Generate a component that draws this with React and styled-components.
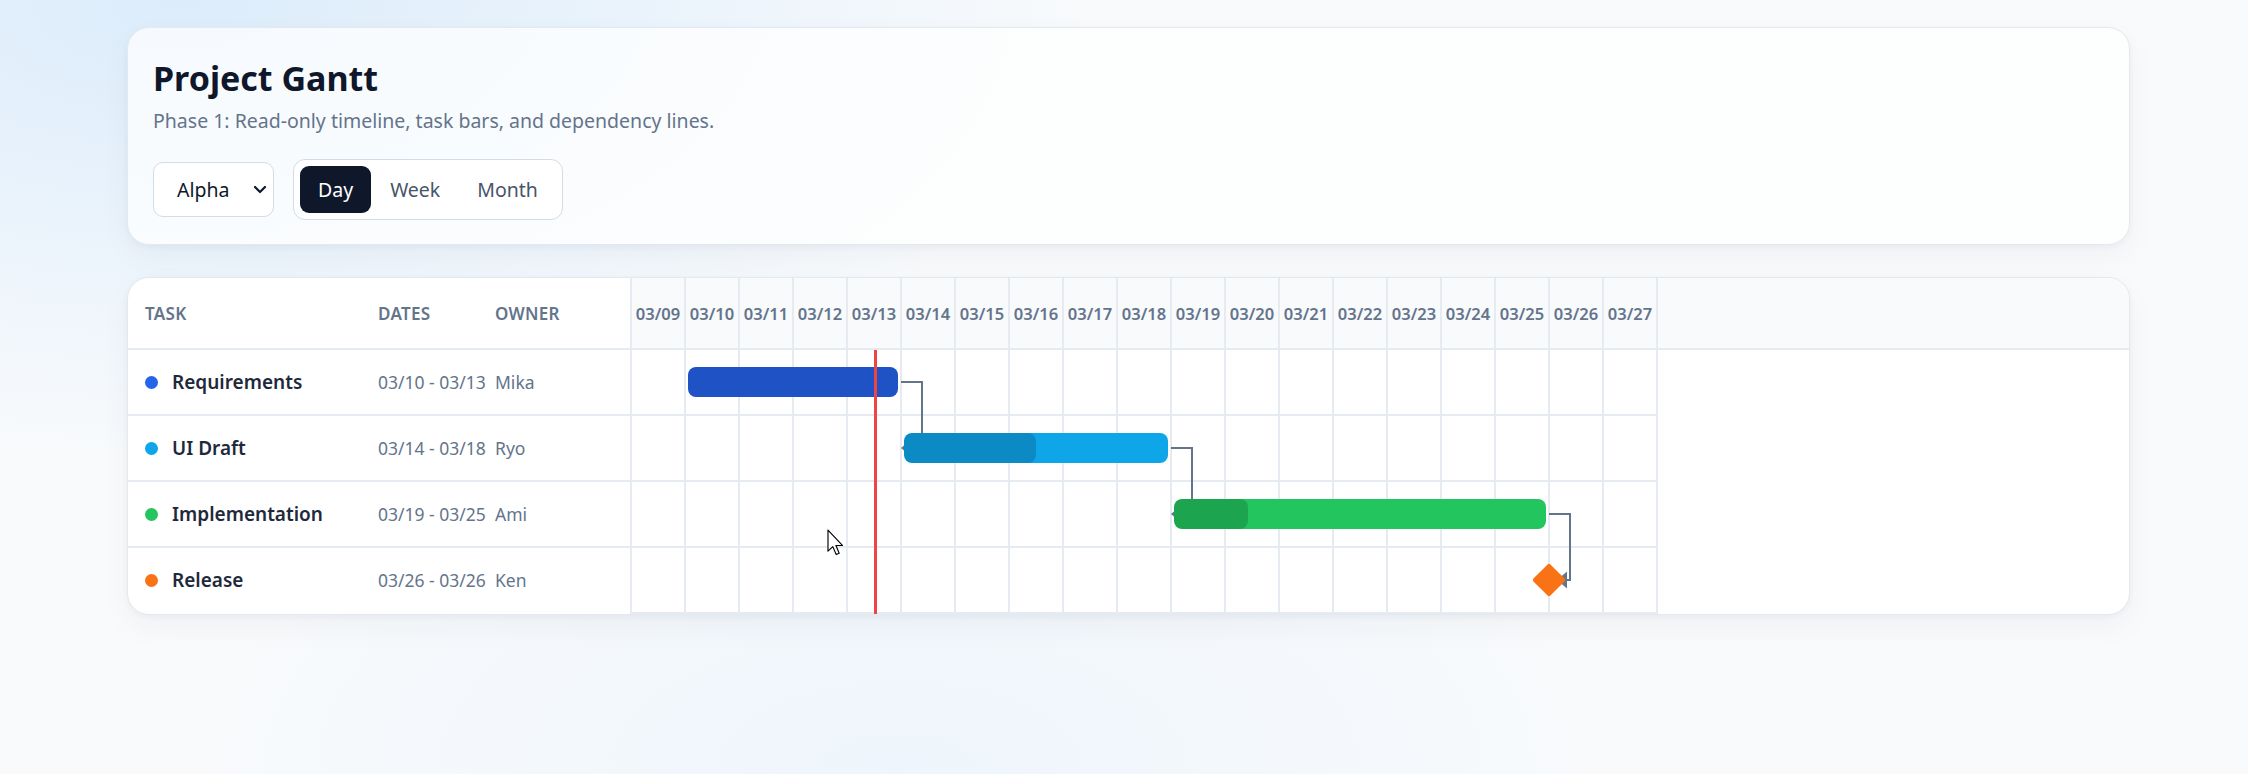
import React from 'react';
import styled, {createGlobalStyle, css} from 'styled-components';

const GlobalStyle = createGlobalStyle`
    html, body {
        margin: 0;
        padding: 0;
    }
    body {
        font-family: "Segoe UI", "Noto Sans", sans-serif;
        background:
            radial-gradient(1300px 650px at 8% 0%, #dcecfb 0%, rgba(220, 236, 251, 0) 70%),
            radial-gradient(1000px 500px at 40% 100%, #eef5fc 0%, rgba(238, 245, 252, 0) 70%),
            #f8fafc;
        min-height: 774px;
    }
`

const COL = 54;
const ROW = 66;

const days = ['03/09','03/10','03/11','03/12','03/13','03/14','03/15','03/16','03/17','03/18',
    '03/19','03/20','03/21','03/22','03/23','03/24','03/25','03/26','03/27'];

const tasks = [
    {id: 'req', name: 'Requirements', dates: '03/10 - 03/13', owner: 'Mika', color: '#2563eb', start: 1, length: 4, progress: 100},
    {id: 'ui', name: 'UI Draft', dates: '03/14 - 03/18', owner: 'Ryo', color: '#0ea5e9', start: 5, length: 5, progress: 50},
    {id: 'impl', name: 'Implementation', dates: '03/19 - 03/25', owner: 'Ami', color: '#22c55e', start: 10, length: 7, progress: 20},
    {id: 'rel', name: 'Release', dates: '03/26 - 03/26', owner: 'Ken', color: '#f97316', start: 17, milestone: true},
];

const barLeft = t => t.start * COL + 2;
const barRight = t => (t.start + t.length) * COL - 4;
const rowCenter = i => i * ROW + 32;

const Page = styled.div`
    position: relative;
    min-height: 774px;
    box-sizing: border-box;
    padding: 27px 0 0 127px;
`
const Shell = styled.div`
    width: 2003px;
    display: flex;
    flex-direction: column;
    gap: 32px;
`
const Card = styled.div`
    box-sizing: border-box;
    border: 1px solid #e3e9f1;
    border-radius: 22px;
    box-shadow: 0 2px 6px rgba(15, 23, 42, 0.04), 0 12px 32px rgba(15, 23, 42, 0.04);
`
const HeaderCard = styled(Card)`
    background: rgba(255, 255, 255, 0.72);
    padding: 30px 25px 24px;
`
const Title = styled.h1`
    margin: 0;
    font-size: 34px;
    line-height: 40px;
    font-weight: 700;
    color: #0f172a;
`
const Subtitle = styled.p`
    margin: 9px 0 0;
    font-size: 19.5px;
    line-height: 28px;
    color: #64748b;
`
const Controls = styled.div`
    margin-top: 24px;
    display: flex;
    align-items: center;
    gap: 19px;
`
const SelectBox = styled.div`
    box-sizing: border-box;
    width: 121px;
    height: 55px;
    display: flex;
    align-items: center;
    justify-content: space-between;
    padding: 0 6px 0 23px;
    border: 1px solid #d3dbe6;
    border-radius: 10px;
    background: #fff;
    font-size: 19.5px;
    color: #0f172a;
`
const Segmented = styled.div`
    display: flex;
    gap: 1px;
    padding: 6px;
    border: 1px solid #d3dbe6;
    border-radius: 12px;
    background: #fff;
`
const SegButton = styled.div`
    height: 47px;
    padding: 0 18px;
    display: flex;
    align-items: center;
    border-radius: 9px;
    font-size: 19.5px;
    color: #475569;
    ${props => props.active && css`
        background: #0f172a;
        color: #fff;
    `}
`

const GanttCard = styled(Card)`
    background: #fff;
    overflow: hidden;
`
const HeadRow = styled.div`
    display: flex;
    height: 72px;
    box-sizing: border-box;
    border-bottom: 2px solid #e6ebf2;
`
const LeftCols = css`
    box-sizing: border-box;
    width: 504px;
    flex: none;
    display: grid;
    grid-template-columns: 233px 117px 1fr;
    align-items: center;
    padding-left: 17px;
    border-right: 2px solid #e6ebf2;
`
const HeadLeft = styled.div`
    ${LeftCols}
    font-size: 17px;
    font-weight: 600;
    letter-spacing: 0.3px;
    color: #64748b;
`
const HeadTimeline = styled.div`
    flex: 1;
    display: flex;
    background: #f8fafc;
`
const DayCell = styled.div`
    box-sizing: border-box;
    width: ${COL}px;
    flex: none;
    border-right: 2px solid #e6ebf2;
    display: flex;
    align-items: center;
    justify-content: center;
    font-size: 16.5px;
    font-weight: 600;
    color: #64748b;
`
const Body = styled.div`
    display: flex;
`
const BodyLeft = styled.div`
    box-sizing: border-box;
    width: 504px;
    flex: none;
    border-right: 2px solid #e6ebf2;
`
const TaskRow = styled.div`
    ${LeftCols}
    width: 502px;
    border-right: none;
    height: ${ROW}px;
    border-bottom: 2px solid #e6ebf2;
    &:last-child {
        height: ${ROW - 2}px;
        border-bottom: none;
    }
`
const TaskName = styled.div`
    display: flex;
    align-items: center;
    gap: 14px;
    font-size: 19px;
    font-weight: 600;
    color: #1e293b;
`
const Dot = styled.span`
    width: 13px;
    height: 13px;
    border-radius: 50%;
    background: ${props => props.color};
`
const Meta = styled.div`
    font-size: 17.5px;
    color: #64748b;
`
const TimelineBody = styled.div`
    position: relative;
    width: ${COL * days.length}px;
    flex: none;
`
const GridRow = styled.div`
    display: flex;
    height: ${ROW}px;
    box-sizing: border-box;
    border-bottom: 2px solid #e6ebf2;
    &:last-child {
        height: ${ROW - 2}px;
        border-bottom: none;
    }
`
const GridCell = styled.div`
    box-sizing: border-box;
    width: ${COL}px;
    flex: none;
    border-right: 2px solid #e6ebf2;
`
const Links = styled.svg`
    position: absolute;
    left: 0;
    top: 0;
    overflow: visible;
`
const Bar = styled.div`
    position: absolute;
    height: 30px;
    border-radius: 8px;
    overflow: hidden;
    background: ${props => props.color};
`
const Progress = styled.div`
    height: 100%;
    border-radius: 8px;
    background: rgba(0, 0, 0, 0.16);
`
const Milestone = styled.div`
    position: absolute;
    width: 24px;
    height: 24px;
    margin: -12px 0 0 -12px;
    border-radius: 2px;
    transform: rotate(45deg);
    background: ${props => props.color};
`
const TodayLine = styled.div`
    position: absolute;
    top: 0;
    bottom: 0;
    left: ${COL * 4.5 - 1.5}px;
    width: 3px;
    background: #ef4444;
`
const Cursor = styled.svg`
    position: absolute;
    left: 827px;
    top: 529px;
`

function Chevron() {
    return (
        <svg width="14" height="9" viewBox="0 0 14 9">
            <polyline points="2,2 7,7 12,2" fill="none" stroke="#0f172a" strokeWidth="2.2" strokeLinecap="round" strokeLinejoin="round"/>
        </svg>
    )
}

function Link({x1, y1, y2, tip}) {
    const elbow = x1 + 21;
    return (
        <g>
            <path d={`M${x1} ${y1} H${elbow} V${y2} H${tip + 6}`} fill="none" stroke="#64748b" strokeWidth="2"/>
            <polygon points={`${tip},${y2} ${tip + 10},${y2 - 8.5} ${tip + 10},${y2 + 8.5}`} fill="#64748b"/>
        </g>
    )
}

function Timeline() {
    const [req, ui, impl, rel] = tasks;
    const ms = {x: rel.start * COL - 1, y: rowCenter(3)};
    return (
        <TimelineBody>
            {tasks.map(t => (
                <GridRow key={t.id}>
                    {days.map(d => <GridCell key={d}/>)}
                </GridRow>
            ))}
            <Links width={COL * days.length} height={ROW * 4 - 2}>
                <Link x1={barRight(req) + 3} y1={rowCenter(0)} y2={rowCenter(1)} tip={barLeft(ui) - 3}/>
                <Link x1={barRight(ui) + 3} y1={rowCenter(1)} y2={rowCenter(2)} tip={barLeft(impl) - 3}/>
                <Link x1={barRight(impl) + 3} y1={rowCenter(2)} y2={ms.y} tip={ms.x + 8}/>
            </Links>
            {tasks.filter(t => !t.milestone).map((t, i) => (
                <Bar key={t.id} color={t.color}
                    style={{left: barLeft(t), width: barRight(t) - barLeft(t), top: i * ROW + 17}}>
                    <Progress style={{width: t.progress + '%'}}/>
                </Bar>
            ))}
            <Milestone color={rel.color} style={{left: ms.x, top: ms.y}}/>
            <TodayLine/>
        </TimelineBody>
    )
}

export default function App() {
    return (
        <Page>
            <GlobalStyle/>
            <Shell>
                <HeaderCard>
                    <Title>Project Gantt</Title>
                    <Subtitle>Phase 1: Read-only timeline, task bars, and dependency lines.</Subtitle>
                    <Controls>
                        <SelectBox>
                            <span>Alpha</span>
                            <Chevron/>
                        </SelectBox>
                        <Segmented>
                            <SegButton active>Day</SegButton>
                            <SegButton>Week</SegButton>
                            <SegButton>Month</SegButton>
                        </Segmented>
                    </Controls>
                </HeaderCard>

                <GanttCard>
                    <HeadRow>
                        <HeadLeft>
                            <div>TASK</div>
                            <div>DATES</div>
                            <div>OWNER</div>
                        </HeadLeft>
                        <HeadTimeline>
                            {days.map(d => <DayCell key={d}>{d}</DayCell>)}
                        </HeadTimeline>
                    </HeadRow>
                    <Body>
                        <BodyLeft>
                            {tasks.map(t => (
                                <TaskRow key={t.id}>
                                    <TaskName><Dot color={t.color}/>{t.name}</TaskName>
                                    <Meta>{t.dates}</Meta>
                                    <Meta>{t.owner}</Meta>
                                </TaskRow>
                            ))}
                        </BodyLeft>
                        <Timeline/>
                    </Body>
                </GanttCard>
            </Shell>
            <Cursor width="17" height="27" viewBox="0 0 12 19">
                <path d="M0.7 0.7 L0.7 15.6 L4.1 12.4 L6.5 18 L8.6 17.1 L6.3 11.6 L10.9 11.6 Z"
                    fill="#fff" stroke="#000" strokeWidth="0.8" strokeLinejoin="round"/>
            </Cursor>
        </Page>
    )
}
